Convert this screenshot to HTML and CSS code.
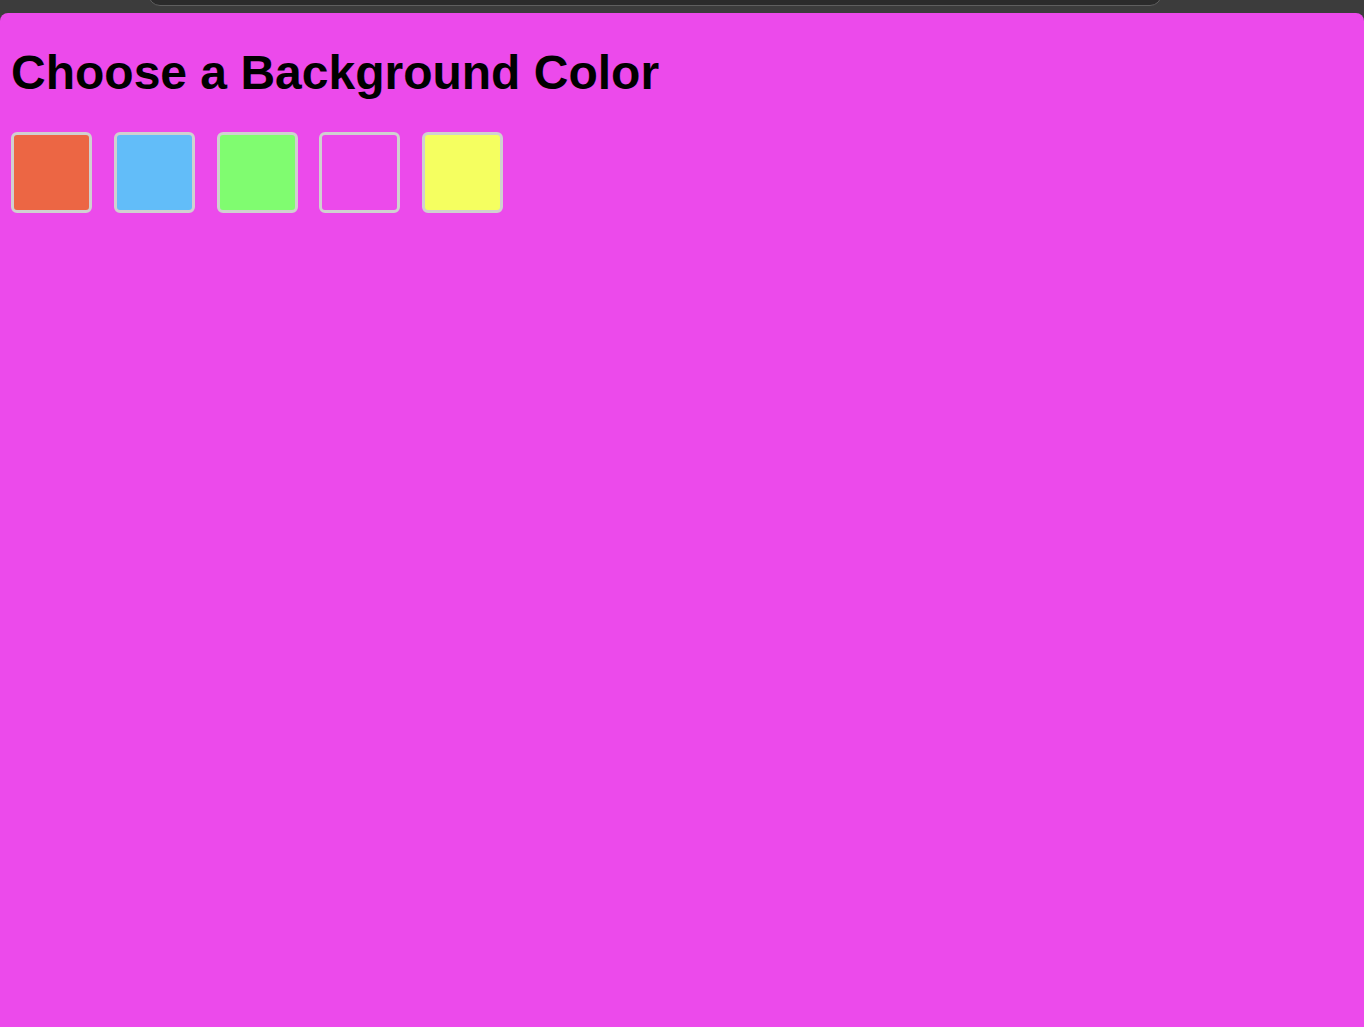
FILE: index.html
```html
<!DOCTYPE html>
<html lang="en">
<head>
<meta charset="utf-8">
<title>Choose a Background Color</title>
<link rel="stylesheet" href="styles.css">
</head>
<body>
<div class="chrome">
  <div class="address"></div>
</div>
<main class="panel">
  <h1 class="title">Choose a Background Color</h1>
  <div class="swatches">
    <button class="swatch swatch-red" aria-label="Red"></button>
    <button class="swatch swatch-blue" aria-label="Blue"></button>
    <button class="swatch swatch-green" aria-label="Green"></button>
    <button class="swatch swatch-pink" aria-label="Pink"></button>
    <button class="swatch swatch-yellow" aria-label="Yellow"></button>
  </div>
</main>
</body>
</html>
```
FILE: styles.css
```css
html, body {
  margin: 0;
  padding: 0;
  height: 100%;
}
body {
  background: #3c3c3c;
  font-family: "Liberation Sans", Arial, sans-serif;
  display: flex;
  flex-direction: column;
  overflow: hidden;
}
.chrome {
  height: 13px;
  flex: 0 0 13px;
  display: flex;
  overflow: hidden;
}
.address {
  margin-left: 148px;
  margin-top: -14px;
  width: 1014px;
  height: 20px;
  box-sizing: border-box;
  background: #2b2b2b;
  border: 1px solid #5f5f5f;
  border-radius: 0 0 12px 12px;
}
.panel {
  flex: 1;
  background: #ec4aeb;
  border-radius: 8px 8px 0 0;
  padding: 0 11px;
}
.title {
  margin: 32px 0 32px;
  font-size: 48px;
  font-weight: bold;
  color: #000;
  line-height: normal;
}
.swatches {
  display: flex;
  gap: 21.75px;
}
.swatch {
  width: 81px;
  height: 81px;
  box-sizing: border-box;
  border: 3px solid #d0d0d0;
  border-radius: 6px;
  padding: 0;
  cursor: pointer;
}
.swatch-red { background: #ec6644; }
.swatch-blue { background: #62bdf9; }
.swatch-green { background: #80fc70; }
.swatch-pink { background: #ec4aeb; }
.swatch-yellow { background: #f5ff60; }
```
